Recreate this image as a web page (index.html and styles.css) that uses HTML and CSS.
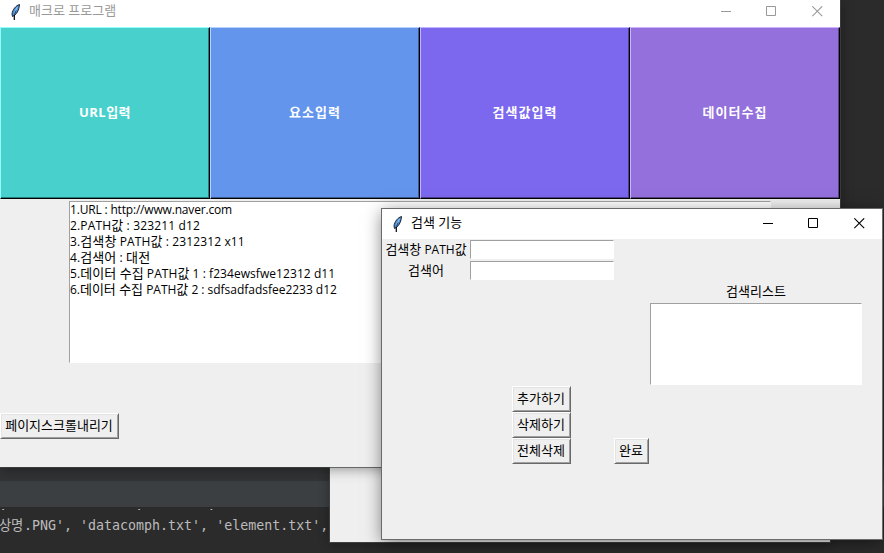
FILE: index.html
```html
<!DOCTYPE html>
<html lang="ko">
<head>
<meta charset="utf-8">
<title>매크로 프로그램</title>
<link rel="stylesheet" href="styles.css">
</head>
<body>
<svg class="defs" width="0" height="0" aria-hidden="true">
  <symbol id="feather" viewBox="0 0 12 18">
    <path d="M10.500 1.500C7 2.500 3.500 6.500 3 11L3.500 13.500C7 12 10 8 10.500 1.500z" fill="#4f8fd0" stroke="#1c2530" stroke-width="1"/>
    <path d="M8.500 4 5.500 9.500" stroke="#8fc1f5" stroke-width="1.200" fill="none"/>
    <path d="M7 7.500 5.500 12" stroke="#24466e" fill="none"/>
    <path d="M5.300 12V17" stroke="#000" stroke-width="1.200" fill="none"/>
  </symbol>
  <symbol id="min" viewBox="0 0 11 11"><path d="M0 5.500H10" stroke="currentColor"/></symbol>
  <symbol id="max" viewBox="0 0 11 11"><path d="M.5.5H9.500V9.500H.5z" stroke="currentColor" fill="none"/></symbol>
  <symbol id="close" viewBox="0 0 11 11"><path d="M.3.3 10.200 10.200M10.200.3.3 10.200" stroke="currentColor" stroke-width="1.100"/></symbol>
</svg>
<div class="desktop">
  <div class="editor">
    <div class="editor-code"></div>
    <div class="editor-gap"></div>
    <div class="editor-bar"></div>
    <div class="console">
      <div class="console-prev">,                ,       ',</div>
      <div class="console-line"><span class="console-ko">상명</span>.PNG', 'datacomph.txt', 'element.txt',</div>
    </div>
  </div>
  <div class="back-window"></div>

  <section class="window main-window">
    <header class="titlebar inactive">
      <svg class="feather"><use href="#feather"/></svg>
      <span class="title">매크로 프로그램</span>
      <span class="controls"><svg><use href="#min"/></svg><svg><use href="#max"/></svg><svg><use href="#close"/></svg></span>
    </header>
    <nav class="tiles">
      <div class="tile teal">URL입력</div>
      <div class="tile blue">요소입력</div>
      <div class="tile slate">검색값입력</div>
      <div class="tile purple">데이터수집</div>
    </nav>
    <ul class="sunken log">
      <li class="l1">1.URL : http://www.naver.com</li>
      <li class="l2">2.PATH<span class="ko">값</span> : 323211 d12</li>
      <li class="l3">3.<span class="ko">검색창</span> PATH<span class="ko">값</span> : 2312312 x11</li>
      <li class="l4">4.<span class="ko">검색어</span> : <span class="ko">대전</span></li>
      <li class="l5">5.<span class="ko">데이터 수집</span> PATH<span class="ko">값</span> 1 : f234ewsfwe12312 d11</li>
      <li class="l6">6.<span class="ko">데이터 수집</span> PATH<span class="ko">값</span> 2 : sdfsadfadsfee2233 d12</li>
    </ul>
    <div class="btn scroll-btn">페이지스크롤내리기</div>
  </section>

  <section class="window dialog">
    <header class="titlebar">
      <svg class="feather"><use href="#feather"/></svg>
      <span class="title">검색 기능</span>
      <span class="controls"><svg><use href="#min"/></svg><svg><use href="#max"/></svg><svg><use href="#close"/></svg></span>
    </header>
    <div class="form">
      <div class="label r1"><span><span class="ko">검색창</span> PATH<span class="ko">값</span></span></div>
      <div class="sunken entry r1"></div>
      <div class="label r2 ko">검색어</div>
      <div class="sunken entry r2"></div>
      <div class="label list-label ko">검색리스트</div>
      <div class="sunken list"></div>
      <div class="btn add">추가하기</div>
      <div class="btn remove">삭제하기</div>
      <div class="btn clear">전체삭제</div>
      <div class="btn done">완료</div>
    </div>
  </section>
</div>
</body>
</html>
```
FILE: styles.css
```css
* { box-sizing: border-box; }
body { margin: 0; font: 12px/16px "Open Sans", "Noto Sans CJK KR", sans-serif; color: #000; }
.defs { position: absolute; }
.desktop { position: relative; width: 884px; height: 553px; overflow: hidden; background: #2b2b2b; }
.ko, .title, .btn { font-size: 13px; line-height: 15px; }

.editor { display: grid; grid-template-rows: 467px 14px 26px 46px; height: 553px; }
.editor-gap { background: #313335; }
.editor-bar { background: #3c3f41; }
.console { overflow: hidden; background: #2b2b2b; color: #bbb; font: 13.3px/18px "DejaVu Sans Mono", "Noto Sans CJK KR", monospace; }
.console-prev, .console-line { white-space: pre; }
.console-prev { height: 3px; line-height: 2px; overflow: hidden; text-indent: -1px; }
.console-prev { line-height: 0; }
.console-line { margin-top: 7px; height: 18px; }
.console-ko { display: inline-block; width: 24px; letter-spacing: -0.3px; text-indent: -1px; }

.back-window { position: absolute; left: 329px; top: 300px; width: 502px; height: 243px; background: #efefef; border: 1px solid #404040; box-shadow: 0 2px 10px rgba(0, 0, 0, .3); }

.window { position: absolute; background: #efefef; }
.main-window { left: 0; top: 0; width: 840px; height: 467px; box-shadow: 0 0 0 1px rgba(70, 70, 70, .7), 0 2px 12px rgba(0, 0, 0, .4); }
.dialog { left: 382px; top: 209px; width: 500px; height: 330px; box-shadow: 0 0 0 1px #6b6b6b, 0 3px 16px rgba(0, 0, 0, .5); }

.titlebar { display: flex; align-items: center; height: 30px; padding: 0 0 1px 9px; background: #fff; }
.titlebar.inactive { height: 27px; padding-bottom: 4px; color: #999; }
.feather { width: 12px; height: 18px; }
.title { margin-left: 8px; padding-bottom: 2px; }
.controls { display: flex; gap: 35px; margin-left: auto; padding-right: 17px; }
.controls svg { width: 11px; height: 11px; }
.controls svg:first-child { margin-right: -1px; }

.tiles { display: grid; grid-template-columns: repeat(4, 210px); height: 172px; }
.tile { display: flex; align-items: center; justify-content: center; padding-bottom: 2px; color: #fff; font-size: 13px; font-weight: 700; letter-spacing: 1px; border: 1px solid; border-right-color: #000; border-bottom-color: #000; }
.teal { letter-spacing: .5px; background: #48d1cc; border-top-color: #93fff8; border-left-color: #93fff8; box-shadow: inset -1px -1px #247e7b; }
.blue { background: #6495ed; border-top-color: #b6d0ff; border-left-color: #b6d0ff; box-shadow: inset -1px -1px #3b598e; }
.slate { background: #7b68ee; border-top-color: #c0b5ff; border-left-color: #c0b5ff; box-shadow: inset -1px -1px #4a3e8f; }
.purple { background: #9370db; border-top-color: #cdb2ff; border-left-color: #cdb2ff; box-shadow: inset -1px -1px #584383; }

.sunken { background: #fff; border: 1px solid #fff; border-top-color: #a0a0a0; border-left-color: #a0a0a0; }
.log { list-style: none; margin: 2px 0 0 69px; padding: 0; width: 702px; height: 162px; }
.log li { height: 16px; white-space: nowrap; }
.l1 { letter-spacing: -.18px; }
.l2 { letter-spacing: .15px; }
.l3 { letter-spacing: .12px; }
.l4 { letter-spacing: .1px; }
.l5 { letter-spacing: .06px; }
.l6 { letter-spacing: -.02px; }

.btn { display: flex; align-items: center; justify-content: center; height: 26px; padding: 0 1px 2px 0; border: 1px solid; border-color: #fff #696969 #696969 #fff; box-shadow: inset 1px 1px #e3e3e3, inset -1px -1px #a0a0a0; white-space: nowrap; }
.scroll-btn { width: 119px; margin-top: 50px; }

.form { display: grid; grid-template-columns: 88px 144px 36px 212px; grid-template-rows: 21px 21px 21px 84px 26px 26px 26px; }
.label { display: flex; align-items: center; justify-content: center; grid-column: 1; white-space: nowrap; }
.r1 { grid-row: 1; }
.r2 { grid-row: 2; }
.entry { grid-column: 2; height: 19px; margin-top: 1px; }
.list-label { grid-column: 4; grid-row: 3; }
.list { grid-column: 4; grid-row: 4; margin: 1px 0; }
.add, .remove, .clear { grid-column: 2; width: 59px; margin-left: 42px; }
.add { grid-row: 5; }
.remove { grid-row: 6; }
.clear { grid-row: 7; }
.done { grid-column: 3; grid-row: 7; width: 35px; }
```
